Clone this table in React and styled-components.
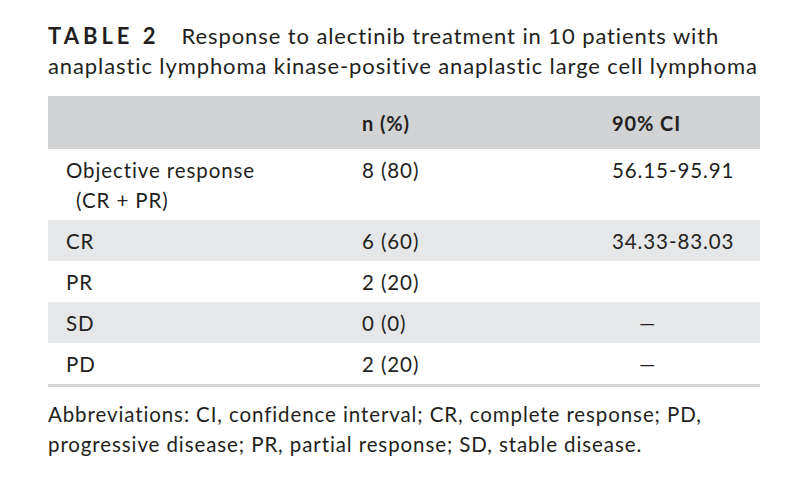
import React from "react";
import styled, { createGlobalStyle } from "styled-components";

const rows = [
  { label: "Objective response\n(CR + PR)", n: "8 (80)", ci: "56.15-95.91" },
  { label: "CR", n: "6 (60)", ci: "34.33-83.03", band: true },
  { label: "PR", n: "2 (20)", ci: "" },
  { label: "SD", n: "0 (0)", ci: "—", band: true },
  { label: "PD", n: "2 (20)", ci: "—" },
];

export default function App() {
  return (
    <>
      <GlobalStyle />
      <Page>
        <Caption>
          <Label>TABLE 2</Label>
          Response to alectinib treatment in 10 patients with anaplastic
          lymphoma kinase-positive anaplastic large cell lymphoma
        </Caption>
        <Table>
          <HeadCell />
          <HeadCell>n (%)</HeadCell>
          <HeadCell>90% CI</HeadCell>
          {rows.map((row) => (
            <React.Fragment key={row.label}>
              <Cell $band={row.band} $hang>
                {row.label}
              </Cell>
              <Cell $band={row.band}>{row.n}</Cell>
              <Cell $band={row.band}>
                {row.ci === "—" ? <Dash>—</Dash> : row.ci}
              </Cell>
            </React.Fragment>
          ))}
        </Table>
        <Footnote>
          Abbreviations: CI, confidence interval; CR, complete response; PD,
          progressive disease; PR, partial response; SD, stable disease.
        </Footnote>
      </Page>
    </>
  );
}

const GlobalStyle = createGlobalStyle`
  body {
    margin: 0;
    background: #ffffff;
    font-family: Lato, "Noto Sans", sans-serif;
    color: #231f20;
  }
`;

const Page = styled.div`
  width: 712px;
  padding: 21px 0 0 48px;
`;

const Caption = styled.div`
  font-size: 22px;
  line-height: 30px;
  letter-spacing: 0.9px;
  margin-bottom: 15px;
`;

const Label = styled.span`
  font-weight: bold;
  letter-spacing: 4px;
  margin-right: 22px;
`;

const Table = styled.div`
  display: grid;
  grid-template-columns: 296px 250px 1fr;
  font-size: 20.5px;
  line-height: 30px;
  letter-spacing: 0.9px;
  border-bottom: 3px solid #d1d3d4;
`;

const HeadCell = styled.div`
  background: #d1d3d4;
  font-weight: bold;
  font-size: 20px;
  padding: 12px 18px 11px;
`;

const Cell = styled.div`
  background: ${(p) => (p.$band ? "#e6e7e8" : "transparent")};
  padding: 6px 18px 5px ${(p) => (p.$hang ? "28px" : "18px")};
  text-indent: ${(p) => (p.$hang ? "-10px" : "0")};
  white-space: pre-line;
`;

const Dash = styled.span`
  margin-left: 27px;
`;

const Footnote = styled.div`
  margin-top: 12px;
  font-size: 20.5px;
  line-height: 30px;
  letter-spacing: 0.9px;
`;
